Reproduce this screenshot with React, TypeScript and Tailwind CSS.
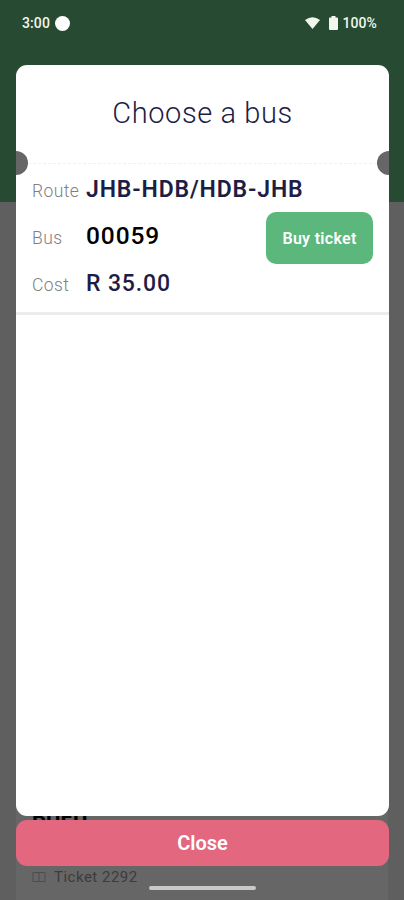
type DetailProps = {
  label: string;
  value: string;
  valueClass: string;
};

function Detail({ label, value, valueClass }: DetailProps) {
  return (
    <div className="flex h-[47px] items-baseline">
      <span className="w-[54px] shrink-0 text-[17.5px] font-[350] leading-7 tracking-[0.4px] text-[#808080]">
        {label}
      </span>
      <span className={`whitespace-nowrap leading-7 ${valueClass}`}>
        {value}
      </span>
    </div>
  );
}

function StatusBar() {
  return (
    <div className="flex h-[46px] items-center justify-between pl-[22px] pr-[27px] text-[#f1f6ef]">
      <div className="flex items-center gap-[5px]">
        <span className="text-[14px] font-medium tracking-[0.1px]">3:00</span>
        <span className="size-[15px] rounded-full bg-white" />
      </div>
      <div className="flex items-center">
        <svg width="15" height="12" viewBox="0 0 15 12" fill="currentColor">
          <path d="M0 3Q7.500-2.500 15 3L7.500 12Z" />
        </svg>
        <svg className="ml-[9px]" width="9" height="14" viewBox="0 0 9 14" fill="currentColor">
          <path d="M2.500 0h4v1.500H8a1 1 0 0 1 1 1V13a1 1 0 0 1-1 1H1a1 1 0 0 1-1-1V2.500a1 1 0 0 1 1-1h1.500z" />
        </svg>
        <span className="ml-1 text-[14px] font-medium tracking-[0.1px]">100%</span>
      </div>
    </div>
  );
}

function TicketBackdrop() {
  return (
    <div className="absolute inset-0 bg-[#5f5f5f]">
      <div className="h-[202px] bg-[#274b32]" />
      <div className="mx-4 flex h-[698px] flex-col justify-end bg-[#666666] px-4">
        <div className="h-[28px] text-[22px] font-bold leading-7 text-black">BUEU</div>
        <div className="mt-[30px] flex h-[38px] items-start gap-2 text-[#3c3c3c]">
          <svg className="mt-[9px] opacity-60" width="14" height="12" viewBox="0 0 14 12" fill="none" stroke="currentColor">
            <path d="M1 1.500h12v9H1zM7 1.500v9" />
          </svg>
          <span className="text-[15px] leading-[30px] tracking-[0.5px]">Ticket 2292</span>
        </div>
      </div>
    </div>
  );
}

export default function App() {
  return (
    <div className="relative h-[900px] w-[404px] overflow-hidden font-['Roboto',sans-serif]">
      <TicketBackdrop />
      <div className="relative flex h-full flex-col">
        <StatusBar />
        <main className="relative mx-4 mt-[19px] h-[751px] w-[373px] shrink-0 overflow-hidden rounded-[11px] bg-white">
          <h1 className="flex h-[98px] items-center justify-center text-[29px] font-[350] tracking-[0.6px] text-[#1d1d46]">
            Choose a bus
          </h1>
          <div className="mx-3 border-t border-dashed border-[#f0f0f0]" />
          <span className="absolute -left-3 top-[86px] size-6 rounded-full bg-[#666666]" />
          <span className="absolute -right-3 top-[86px] size-6 rounded-full bg-[#666666]" />
          <section className="relative h-[151px] border-b-[3px] border-[#ececec] px-4 pt-3">
            <Detail label="Route" value="JHB-HDB/HDB-JHB" valueClass="text-[23px] font-semibold tracking-[0.85px] text-[#1d1d46]" />
            <Detail label="Bus" value="00059" valueClass="-mt-px text-[24.5px] font-medium tracking-[0.9px] text-black" />
            <Detail label="Cost" value="R 35.00" valueClass="text-[23px] font-medium tracking-[0.85px] text-[#1d1d46]" />
            <button className="absolute right-4 top-[48px] h-[52px] w-[107px] rounded-[10px] bg-[#5bb77b] pt-0.5 text-[16px] font-semibold tracking-[0.3px] text-white">
              Buy ticket
            </button>
          </section>
        </main>
        <button className="mx-4 mt-1 h-[46px] w-[373px] shrink-0 rounded-[11px] bg-[#e2677f] text-[20px] font-semibold text-white">
          Close
        </button>
        <div className="mt-5 h-1 w-[107px] self-center rounded-full bg-[#c9c9c9]" />
      </div>
    </div>
  );
}
